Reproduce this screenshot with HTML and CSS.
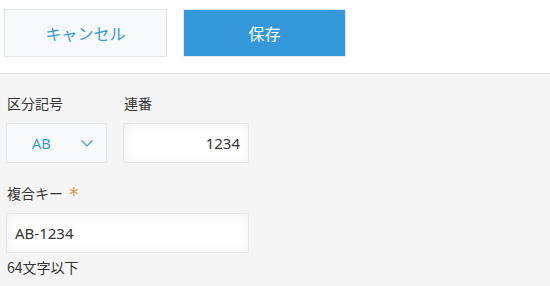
FILE: index.html
```html
<!DOCTYPE html>
<html lang="ja">
<head>
<meta charset="utf-8">
<link rel="stylesheet" href="styles.css">
</head>
<body>
<div class="toolbar">
  <button class="btn btn-cancel">キャンセル</button>
  <button class="btn btn-save">保存</button>
</div>
<div class="form">
  <div class="row">
    <div class="field">
      <div class="label">区分記号</div>
      <div class="select">
        <span class="select-value">AB</span>
        <svg class="chevron" width="12" height="7" viewBox="0 0 12 7"><path d="M0.5 0.5 L6 6 L11.5 0.5" fill="none" stroke="#3498db" stroke-width="1.1"/></svg>
      </div>
    </div>
    <div class="field">
      <div class="label">連番</div>
      <div class="input input-num">1234</div>
    </div>
  </div>
  <div class="row row2">
    <div class="field">
      <div class="label">複合キー<span class="req">*</span></div>
      <div class="input input-wide">AB-1234</div>
      <div class="hint">64文字以下</div>
    </div>
  </div>
</div>
</body>
</html>
```
FILE: styles.css
```css
html, body {
  margin: 0;
  padding: 0;
  background: #f5f5f5;
  font-family: "Noto Sans", "Noto Sans CJK JP", sans-serif;
  color: #333;
}
.toolbar {
  background: #fff;
  border-bottom: 1px solid #e3e3e3;
  display: flex;
  align-items: flex-start;
  gap: 16px;
  padding: 9px 0 0 4px;
  box-sizing: border-box;
  height: 74px;
}
.btn {
  width: 163px;
  height: 48px;
  border: 1px solid #e3e7e8;
  font-family: "Noto Sans CJK JP", sans-serif;
  font-size: 16px;
  padding: 0;
  margin: 0;
}
.btn-cancel {
  background: #f7f9fa;
  color: #3498db;
}
.btn-save {
  background: #3498db;
  color: #fff;
}
.form {
  padding: 19px 0 0 6px;
}
.row {
  display: flex;
  gap: 16px;
}
.row2 {
  margin-top: 20px;
}
.label {
  font-family: "Noto Sans CJK JP", sans-serif;
  font-size: 14px;
  line-height: 20px;
  height: 20px;
  padding-left: 1px;
  margin-bottom: 10px;
}
.req {
  display: inline-block;
  color: #e6964a;
  margin-left: 6px;
  font-family: "DejaVu Sans", sans-serif;
  font-size: 19px;
  line-height: 20px;
  vertical-align: top;
  position: relative;
  top: 1px;
}
.select {
  width: 101px;
  height: 40px;
  box-sizing: border-box;
  background: #f7f9fa;
  border: 1px solid #e3e7e8;
  display: flex;
  align-items: center;
  padding: 0 13px 0 25px;
  justify-content: space-between;
  color: #3498db;
  font-size: 14.5px;
}
.input {
  height: 40px;
  box-sizing: border-box;
  background: #fff;
  border: 1px solid #e3e7e8;
  box-shadow: 1px 1px 12px #f0f0f0 inset;
  display: flex;
  align-items: center;
  font-size: 15px;
  padding: 0 8px;
}
.input-num {
  width: 126px;
  justify-content: flex-end;
}
.input-wide {
  width: 243px;
}
.hint {
  font-family: "Noto Sans CJK JP", sans-serif;
  font-size: 14px;
  line-height: 20px;
  margin-top: 4px;
  padding-left: 1px;
}
```
